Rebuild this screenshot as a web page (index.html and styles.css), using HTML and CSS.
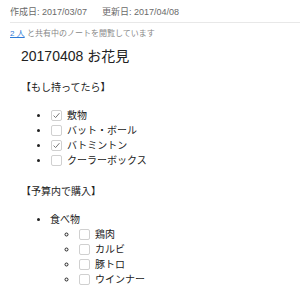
FILE: index.html
```html
<!DOCTYPE html>
<html lang="ja">
<head>
<meta charset="utf-8">
<link rel="stylesheet" href="styles.css">
</head>
<body>
<div class="meta"><span class="date">作成日: 2017/03/07</span><span class="date">更新日: 2017/04/08</span></div>
<div class="share"><a class="people" href="#">2 人</a> と共有中のノートを閲覧しています</div>
<div class="note">
  <h1 class="title">20170408 お花見</h1>
  <p class="section first">【もし持ってたら】</p>
  <ul class="list">
    <li><span class="cb checked"><svg viewBox="0 0 11 11" width="11" height="11"><path d="M2.6 5.6 L4.6 7.6 L8.4 3.2" fill="none" stroke="#777" stroke-width="1"/></svg></span>敷物</li>
    <li><span class="cb"></span>バット・ボール</li>
    <li><span class="cb checked"><svg viewBox="0 0 11 11" width="11" height="11"><path d="M2.6 5.6 L4.6 7.6 L8.4 3.2" fill="none" stroke="#777" stroke-width="1"/></svg></span>バトミントン</li>
    <li><span class="cb"></span>クーラーボックス</li>
  </ul>
  <p class="section second">【予算内で購入】</p>
  <ul class="list list2">
    <li>食べ物
      <ul class="sub">
        <li><span class="cb"></span>鶏肉</li>
        <li><span class="cb"></span>カルビ</li>
        <li><span class="cb"></span>豚トロ</li>
        <li><span class="cb"></span>ウインナー</li>
      </ul>
    </li>
  </ul>
</div>
</body>
</html>
```
FILE: styles.css
```css
html, body {
  margin: 0;
  padding: 0;
  background: #fff;
}
body {
  font-family: "Liberation Sans", "Noto Sans CJK JP", sans-serif;
  color: #333;
  overflow: hidden;
}
.meta {
  margin-left: 10px;
  padding: 5px 0 3px 0;
  line-height: 14px;
  font-size: 9px;
  color: #6a6a6a;
  border-bottom: 1px solid #e8e8e8;
  display: flex;
  gap: 15px;
}
.share {
  padding: 4px 0 0 10px;
  line-height: 14px;
  font-size: 8px;
  color: #888;
}
.people {
  color: #2f7ad6;
  text-decoration: underline;
}
.note {
  padding-left: 21px;
}
.title {
  margin: 5px 0 0 0;
  font-size: 14px;
  font-weight: normal;
  line-height: 20px;
  color: #222;
}
.section {
  margin: 0;
  font-size: 10px;
  line-height: 15px;
  color: #222;
}
.section.first {
  margin-top: 13.5px;
}
.section.second {
  margin-top: 16.5px;
}
.list {
  margin: 13px 0 0 0;
  padding-left: 29px;
  font-size: 10px;
  line-height: 15px;
  color: #222;
}
.list2 {
  margin-top: 12.5px;
}
.sub {
  margin: 0;
  padding-left: 28px;
  list-style-type: circle;
}
.cb {
  display: inline-block;
  box-sizing: border-box;
  width: 11px;
  height: 11px;
  margin: 0 5px 0 1px;
  border: 1px solid #d0d0d0;
  border-radius: 2px;
  background: #fff;
  vertical-align: -2px;
  position: relative;
}
.cb svg {
  position: absolute;
  left: -1px;
  top: -1px;
}
```
